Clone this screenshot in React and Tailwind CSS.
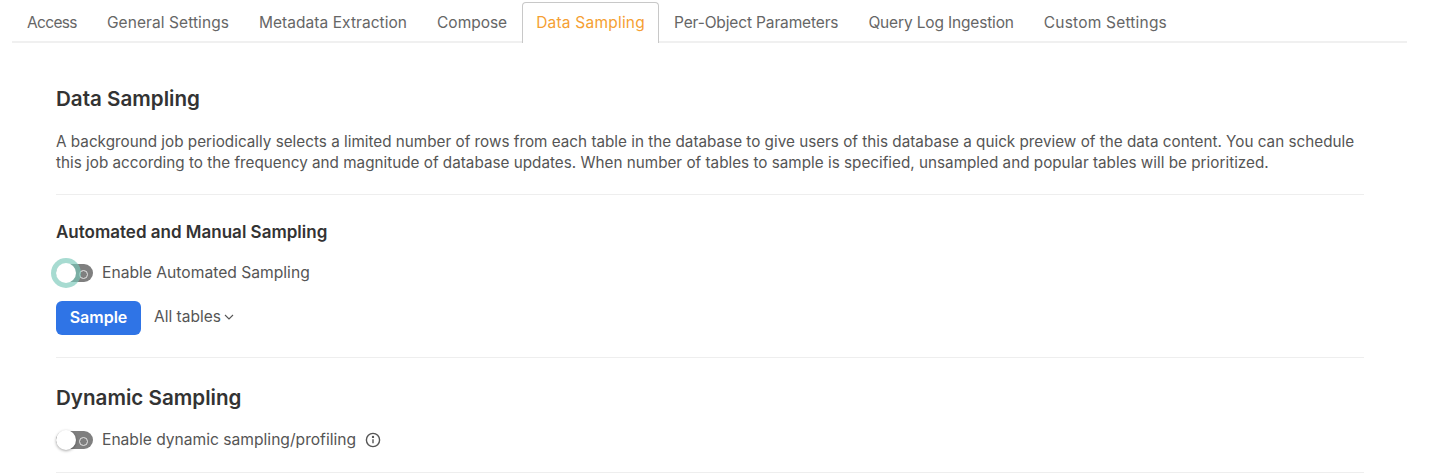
import React from 'react';

const tabs = [
    { label: 'Access', cls: 'tracking-[-0.65px]' },
    { label: 'General Settings', cls: 'tracking-[0.08px]' },
    { label: 'Metadata Extraction', cls: 'tracking-[0.05px]' },
    { label: 'Compose', cls: 'tracking-[-0.02px]' },
    { label: 'Data Sampling', cls: 'tracking-[0.22px]', active: true },
    { label: 'Per-Object Parameters', cls: 'tracking-[-0.14px]' },
    { label: 'Query Log Ingestion', cls: 'tracking-[-0.16px]' },
    { label: 'Custom Settings', cls: 'tracking-[0.2px]' },
];

const Toggle = ({ focused }) => (
    <div className="relative w-[37px] h-[18px] rounded-full bg-[#7f7f7f] flex items-center justify-end pr-[5px] shrink-0">
        <span className="w-[9px] h-[9px] mt-[2px] rounded-full border-[1.5px] border-[#e6e6e6]"></span>
        <span className={`absolute left-0 top-[-1px] w-[20px] h-[20px] rounded-full bg-white ${focused ? 'shadow-[0_0_0_5px_rgba(120,200,185,0.65)]' : 'shadow-[0_1px_3px_rgba(0,0,0,0.35)]'}`}></span>
    </div>
);

const App = () => {
    return (
        <div className="w-[1429px] h-[474px] overflow-hidden bg-white font-['Inter',sans-serif] text-[#555]">
            {/* Tabs */}
            <div className="ml-[12px] w-[1395px] h-[43px] pt-[2px] border-b-2 border-[#f0f0f0] flex text-[15.5px]">
                {tabs.map((tab) => (
                    tab.active ? (
                        <div key={tab.label} className={`h-[41px] px-[13px] flex items-center bg-white border border-b-0 border-[#c8c8c8] rounded-t-[4px] text-[#f5a033] ${tab.cls}`}>
                            {tab.label}
                        </div>
                    ) : (
                        <div key={tab.label} className={`h-[41px] px-[15px] flex items-center text-[#666] ${tab.cls}`}>{tab.label}</div>
                    )
                ))}
            </div>

            <div className="mx-[56px] w-[1308px]">
                <h1 className="mt-[42px] text-[20.6px] leading-[28px] font-semibold text-[#333]">Data Sampling</h1>
                <p className="mt-[18px] text-[15.26px] leading-[21px] tracking-[0.005px] text-[#555]">
                    A background job periodically selects a limited number of rows from each table in the database to give users of this database a quick preview of the data content. You can schedule this job according to the frequency and magnitude of database updates. When number of tables to sample is specified, unsampled and popular tables will be prioritized.
                </p>
                <div className="mt-[21px] border-t border-[#eeeeee]"></div>

                <h2 className="mt-[26px] text-[17px] leading-[22px] font-semibold text-[#333]">Automated and Manual Sampling</h2>
                <div className="mt-[19px] flex items-center gap-[9px] h-[22px] text-[15.65px]">
                    <Toggle focused />
                    <span>Enable Automated Sampling</span>
                </div>
                <div className="mt-[17px] flex items-center h-[34px]">
                    <button className="w-[85px] h-[34px] pb-[2px] rounded-[6px] bg-[#2f74e6] text-white text-[16px] font-semibold">Sample</button>
                    <span className="ml-[13px] mb-[3px] text-[15.5px] flex items-center gap-[3px]">
                        All tables
                        <svg width="10" height="6" viewBox="0 0 10 6" fill="none" stroke="#555" strokeWidth="1.1"><path d="M1 1l4 4 4-4" /></svg>
                    </span>
                </div>
                <div className="mt-[22px] border-t border-[#eeeeee]"></div>

                <h2 className="mt-[26px] text-[20.6px] leading-[28px] font-semibold text-[#333]">Dynamic Sampling</h2>
                <div className="mt-[17px] flex items-center gap-[9px] h-[22px] text-[15.62px]">
                    <Toggle />
                    <span>Enable dynamic sampling/profiling</span>
                    <svg width="16" height="16" viewBox="0 0 16 16" fill="none" stroke="#555" strokeWidth="1.4">
                        <circle cx="8" cy="8" r="6.6" />
                        <path d="M8 7.2v4" />
                        <circle cx="8" cy="4.9" r="0.5" fill="#555" />
                    </svg>
                </div>
                <div className="mt-[21px] border-t border-[#eeeeee]"></div>
            </div>
        </div>
    );
};

export default App;
